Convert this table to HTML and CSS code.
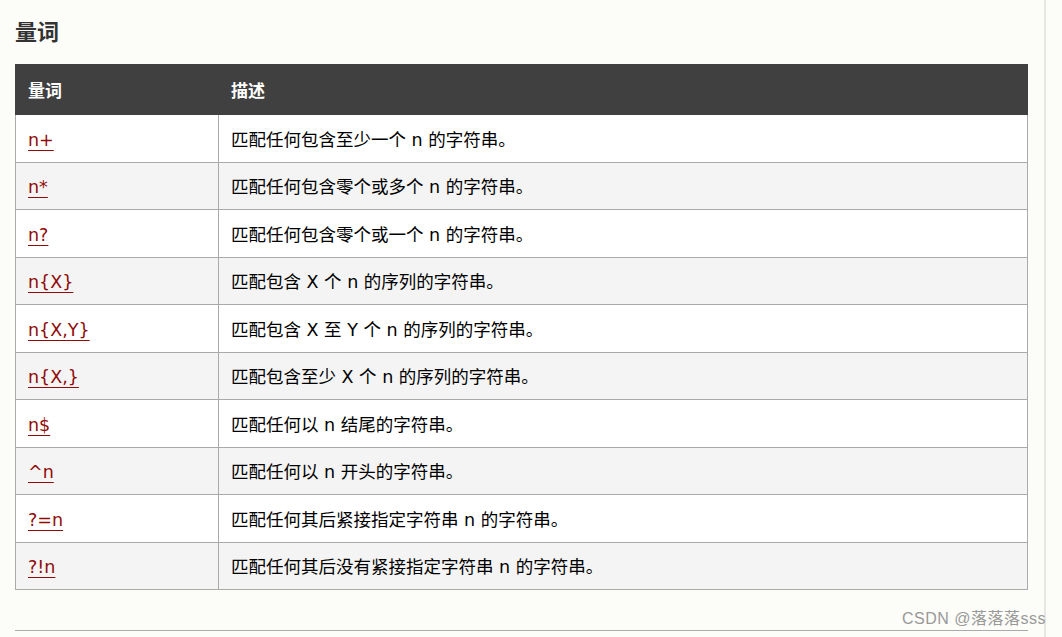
FILE: index.html
```
<!DOCTYPE html>
<html lang="zh">
<head>
<meta charset="utf-8">
<link rel="stylesheet" href="styles.css">
</head>
<body>
<div class="page">
  <div class="content">
    <h2 class="title">量词</h2>
    <table class="ref">
      <thead>
        <tr><th class="c1">量词</th><th>描述</th></tr>
      </thead>
      <tbody>
        <tr><td><a href="#">n+</a></td><td>匹配任何包含至少一个 n 的字符串。</td></tr>
        <tr><td><a href="#">n*</a></td><td>匹配任何包含零个或多个 n 的字符串。</td></tr>
        <tr><td><a href="#">n?</a></td><td>匹配任何包含零个或一个 n 的字符串。</td></tr>
        <tr><td><a href="#">n{X}</a></td><td>匹配包含 X 个 n 的序列的字符串。</td></tr>
        <tr><td><a href="#">n{X,Y}</a></td><td>匹配包含 X 至 Y 个 n 的序列的字符串。</td></tr>
        <tr><td><a href="#">n{X,}</a></td><td>匹配包含至少 X 个 n 的序列的字符串。</td></tr>
        <tr><td><a href="#">n$</a></td><td>匹配任何以 n 结尾的字符串。</td></tr>
        <tr><td><a href="#">^n</a></td><td>匹配任何以 n 开头的字符串。</td></tr>
        <tr><td><a href="#">?=n</a></td><td>匹配任何其后紧接指定字符串 n 的字符串。</td></tr>
        <tr><td><a href="#">?!n</a></td><td>匹配任何其后没有紧接指定字符串 n 的字符串。</td></tr>
      </tbody>
    </table>
    <div class="foot"></div>
    <hr class="rule">
  </div>
  <span class="mark">CSDN @落落落sss</span>
</div>
</body>
</html>
```
FILE: styles.css
```
html, body {
  margin: 0;
  padding: 0;
  background: #fcfcf8;
}
body {
  font-family: "DejaVu Sans", Verdana, "Noto Sans CJK SC", sans-serif;
  font-size: 14px;
  color: #000;
}
.page {
  position: relative;
  width: 1046px;
  height: 637px;
  border-right: 2px solid #e8e8e3;
  box-sizing: border-box;
}
.content {
  padding: 0 0 0 15px;
  width: 1013px;
  overflow: hidden;
}
.title {
  margin: 0;
  padding-top: 15px;
  height: 47px;
  box-sizing: border-box;
  font-family: "Noto Sans CJK SC", sans-serif;
  font-size: 22px;
  line-height: 30px;
  font-weight: bold;
  color: #333;
}
.ref {
  width: 1013px;
  border-collapse: collapse;
  border: 1px solid #aaa;
  margin-top: 17px;
}
.ref th {
  background: #404040;
  color: #fff;
  font-family: "Noto Sans CJK SC", sans-serif;
  font-size: 17px;
  font-weight: bold;
  text-align: left;
  height: 49px;
  padding: 0 12px;
  border: 1px solid #404040;
}
.ref th.c1 {
  width: 178px;
}
.ref td {
  height: 43.5px;
  padding: 3px 12px 0;
  border: 1px solid #aaa;
  font-family: "DejaVu Sans", "Noto Sans CJK SC", sans-serif;
  font-size: 17.5px;
  line-height: 22px;
  vertical-align: middle;
}
.ref td:first-child {
  width: 178px;
}
.ref tbody tr:nth-child(even) td {
  background: #f4f4f4;
}
.ref tbody tr:nth-child(odd) td {
  background: #fff;
}
.ref a {
  color: #900b09;
  text-decoration: underline;
  text-underline-offset: 4px;
}
.foot {
  height: 40px;
}
.mark {
  position: absolute;
  right: -2px;
  top: 609px;
  font-family: "Liberation Sans", "Noto Sans CJK SC", sans-serif;
  font-size: 16px;
  letter-spacing: 0.5px;
  color: #999;
  line-height: 20px;
  white-space: nowrap;
}
.rule {
  margin: 0;
  border: 0;
  border-top: 1px solid #aaa;
  width: 1013px;
}
```
